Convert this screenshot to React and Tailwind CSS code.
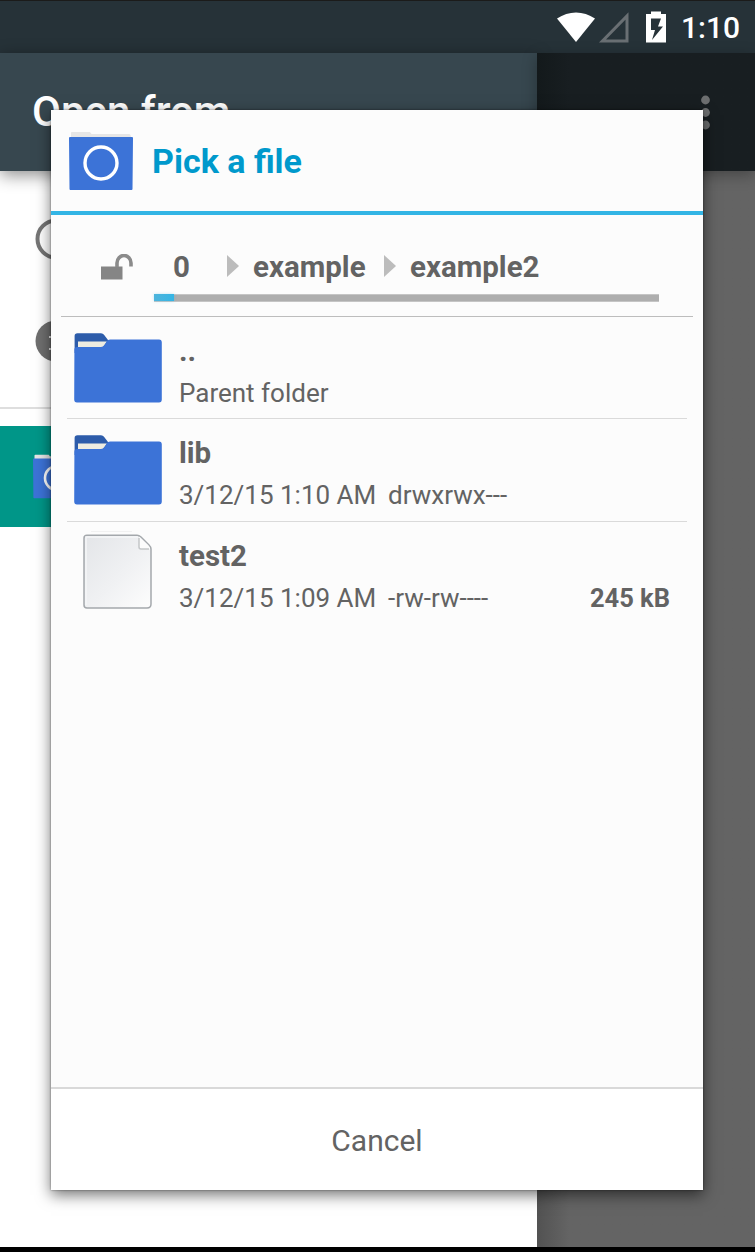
import React from "react";

function BrandFolder({ className }) {
  return (
    <svg className={className} viewBox="0 0 64 60" fill="none">
      <path d="M2 1.5Q2 1 3 1H21L22.500 3H60Q62 3 62 7H2Z" fill="#e6e6e6" />
      <path d="M0 7Q0 6 1 6H63Q64 6 64 7L63.500 58Q63.500 59 62.500 59H1.500Q.5 59 .5 58Z" fill="#3c73d7" />
      <circle cx="32" cy="32" r="16" stroke="#fff" strokeWidth="3.400" />
    </svg>
  );
}

function Folder() {
  return (
    <svg className="h-[70px] w-[88px]" viewBox="0 0 88 70">
      <path d="M.6 20V3Q.6 .3 3.500 .3H27Q29 .3 30 1.800L34 7V20Z" fill="#2d5caa" />
      <path d="M4 8.500H33L29 14H4Z" fill="#eeece1" />
      <path d="M.4 17Q.4 14 3 14H27Q29 14 30.500 12L33 8Q34 6.500 36 6.500H85Q87.800 6.500 87.800 9.500V66.500Q87.800 69.500 85 69.500H3Q.2 69.500 .2 66.500Z" fill="#3c73d7" />
    </svg>
  );
}

function FilePage() {
  return (
    <svg className="h-[78px] w-[72px]" viewBox="0 0 72 78">
      <defs>
        <linearGradient id="paper" x1="0" y1="0" x2="1" y2="1">
          <stop offset="0" stopColor="#e3e5e8" />
          <stop offset=".55" stopColor="#f0f1f3" />
          <stop offset="1" stopColor="#fdfdfd" />
        </linearGradient>
      </defs>
      <path d="M9 .5H50" stroke="#f1f1f1" />
      <path d="M5 4.200H55Q57 4.200 59 6L67 14Q69 16 69 18V73Q69 77 65 77H5Q2 77 2 74V7Q2 4.200 5 4.200Z" fill="url(#paper)" stroke="#a4a8ac" strokeWidth="1.500" />
      <path d="M4 74V6H56" fill="none" stroke="#f5f6f7" strokeWidth="1.500" />
      <path d="M57 5.500V16Q57 18 59 18H68Q68 16 66 14Z" fill="#fcfcfc" />
      <path d="M57 7V16Q57 18 59 18H67" fill="none" stroke="#c4c6c8" strokeWidth="1.500" />
    </svg>
  );
}

function StatusBar() {
  return (
    <div className="flex h-[53px] shrink-0 items-start justify-end border-t border-[#1b1b1a] bg-[#263238] pr-[16px] text-white">
      <svg className="mt-[10px] h-[32px] w-[112px]" viewBox="556 11 112 32">
        <path d="M557 18.500Q566 12.500 576 12.500T595 18.500L576 42Z" fill="#fff" />
        <path d="M602.500 41H627V16Z" fill="none" stroke="#696f73" strokeWidth="3" />
        <path fillRule="evenodd" d="M646 14H651V11.500H661V14H666V42.500H646ZM651 18.500V30H655L652 40L663 26.500H658L661 18.500Z" fill="#fff" />
      </svg>
      <span className="ml-[13px] mt-[9px] w-[58px] text-[30px] font-medium leading-[36px] whitespace-nowrap">1:10</span>
    </div>
  );
}

function Drawer() {
  return (
    <div className="flex w-[537px] shrink-0 flex-col bg-white">
      <div className="flex h-[118px] shrink-0 items-center bg-[#37474f] pl-[32px] shadow-[0_4px_16px_rgba(0,0,0,0.45)]">
        <span className="text-[42px] font-medium leading-[50px] text-white">Open from</span>
      </div>
      <div className="mt-[47px] flex pl-[35px]">
        <svg className="h-[42px] w-[42px]" viewBox="0 0 42 42">
          <circle cx="21" cy="21" r="18.500" fill="none" stroke="#757575" strokeWidth="4" />
        </svg>
      </div>
      <div className="mt-[60px] flex pl-[35px]">
        <svg className="h-[42px] w-[42px]" viewBox="0 0 42 42">
          <circle cx="21" cy="21" r="20.500" fill="#6f6f6f" />
          <path d="M14 17H20M14 29H20" stroke="#eee" strokeWidth="2" />
        </svg>
      </div>
      <div className="mt-[45px] h-[2px] bg-[#dedede]" />
      <div className="mt-[17px] flex h-[101px] items-center bg-[#009688] pl-[33px]">
        <BrandFolder className="h-[45px] w-[48px]" />
      </div>
    </div>
  );
}

function Backdrop() {
  return (
    <div className="flex h-full flex-col">
      <StatusBar />
      <div className="flex grow">
        <Drawer />
        <div className="flex grow flex-col bg-linear-to-r from-[#525252] to-[#646464] to-[32px]">
          <div className="flex h-[118px] justify-end bg-linear-to-r from-[#13191b] to-[#181e21] to-[32px] pr-[45px] pt-[42px] shadow-[0_4px_14px_rgba(0,0,0,0.3)]">
            <svg className="h-[36px] w-[9px]" viewBox="0 0 9 36" fill="#6d6f70">
              <circle cx="4.500" cy="5" r="4.400" />
              <circle cx="4.500" cy="17.500" r="4.400" />
              <circle cx="4.500" cy="30" r="4.400" />
            </svg>
          </div>
        </div>
      </div>
      <div className="h-[5px] shrink-0 bg-black" />
    </div>
  );
}

function Chevron({ className }) {
  return (
    <svg className={className} viewBox="0 0 12 22">
      <path d="M0 0L12 11L0 22Z" fill="#bcbcbc" />
    </svg>
  );
}

function Breadcrumb() {
  return (
    <div className="mx-[10px] h-[102px] border-b-[1.500px] border-[#bdbdbd]">
      <div className="flex h-[79px] items-start pt-[34px] text-[29.500px] font-bold leading-[36px]">
        <svg className="ml-[40px] mt-[5px] h-[26px] w-[33px]" viewBox="0 0 33 26">
          <path d="M0 12.500H21.500V25.500H0Z" fill="#858585" />
          <path d="M16 13V9A7 7.500 0 0 1 30 9V12.500" fill="none" stroke="#8b8b8b" strokeWidth="3.600" />
        </svg>
        <span className="ml-[39px] w-[54px]">0</span>
        <Chevron className="mt-[6px] h-[22px] w-[12px]" />
        <span className="ml-[14px] w-[131px]">example</span>
        <Chevron className="mt-[6px] h-[22px] w-[12px]" />
        <span className="ml-[14px]">example2</span>
      </div>
      <div className="ml-[93px] flex h-[8px] w-[505px] border-y border-[#c5c5c5] bg-[#aeaeae]">
        <div className="-my-px h-[7px] w-[20px] bg-linear-to-r from-[#4db4dc] to-[#33b5e5] shadow-[0_0_3px_rgba(51,181,229,0.35)]" />
      </div>
    </div>
  );
}

function Row({ icon, name, children, last }) {
  return (
    <div className={last ? "mx-[16px] flex h-[102px]" : "mx-[16px] flex h-[102.400px] border-b-[1.500px] border-[#dadada]"}>
      <div className="flex w-[112px] items-start pl-[7px]">{icon}</div>
      <div className="grow pt-[16px]">
        <div className="h-[42px] text-[29.500px] font-bold leading-[36px]">{name}</div>
        <div className="flex text-[26px] leading-[36px]">{children}</div>
      </div>
    </div>
  );
}

function Dialog() {
  return (
    <div className="absolute left-[51px] top-[110px] flex h-[1080px] w-[652px] flex-col bg-[#fcfcfc] text-[#636363] shadow-[0_5px_14px_rgba(0,0,0,0.55),0_0_2px_rgba(0,0,0,0.45)]">
      <div className="flex h-[105px] items-start border-b-4 border-[#33b5e5] pl-[18px]">
        <BrandFolder className="mt-[21px] h-[60px] w-[64px]" />
        <h1 className="ml-[19px] mt-[31px] text-[34px] font-bold leading-[40px] text-[#0099cc]">Pick a file</h1>
      </div>
      <Breadcrumb />
      <div className="grow">
        <Row icon={<div className="pt-[16px]"><Folder /></div>} name="..">
          <span>Parent folder</span>
        </Row>
        <Row icon={<div className="pt-[16px]"><Folder /></div>} name="lib">
          <span className="w-[209px]">3/12/15 1:10 AM</span>
          <span>drwxrwx---</span>
        </Row>
        <Row last icon={<div className="pl-[8px] pt-[9px]"><FilePage /></div>} name="test2">
          <span className="w-[209px]">3/12/15 1:09 AM</span>
          <span>-rw-rw----</span>
          <span className="ml-auto pr-[17px] text-[25.500px] font-bold">245 kB</span>
        </Row>
      </div>
      <button className="h-[103px] border-t-2 border-[#d9d9d9] bg-white pt-[3px] text-[30px] leading-[36px]">Cancel</button>
    </div>
  );
}

export default function App() {
  return (
    <main className="relative h-[1252px] w-[755px] overflow-hidden font-['Roboto',sans-serif]">
      <Backdrop />
      <Dialog />
    </main>
  );
}
